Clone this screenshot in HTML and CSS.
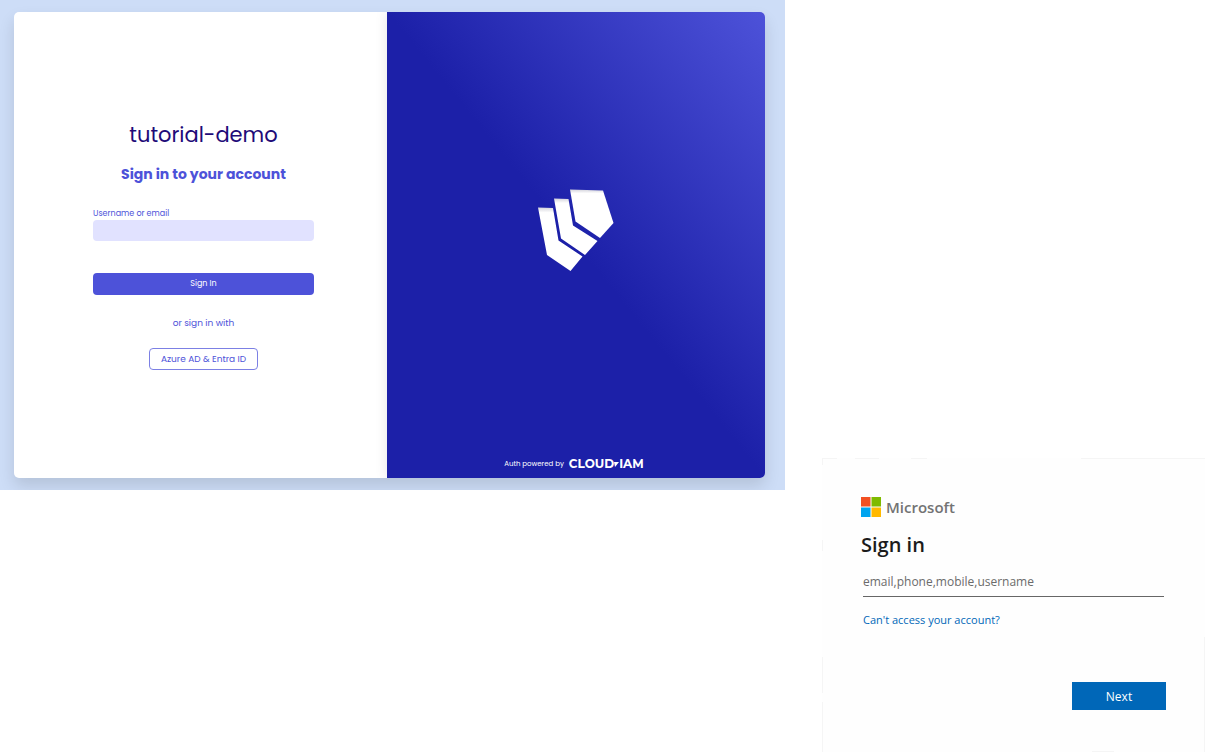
FILE: index.html
```html
<!DOCTYPE html>
<html lang="en">
<head>
    <meta charset="UTF-8">
    <meta name="viewport" content="width=device-width, initial-scale=1.0">
    <title>Sign in to your account</title>
    <link rel="stylesheet" href="styles.css">
</head>
<body>
    <main class="page">
        <section class="realm">
            <div class="realm-card">
                <form class="realm-form">
                    <h1>tutorial-demo</h1>
                    <h2>Sign in to your account</h2>
                    <label for="username">Username or email</label>
                    <input type="text" id="username" class="realm-input">
                    <button type="submit" class="btn-primary">Sign In</button>
                    <p class="or">or sign in with</p>
                    <button type="button" class="btn-outline">Azure AD &amp; Entra ID</button>
                </form>
                <div class="brand">
                    <svg class="brand-logo" viewBox="0 0 76 84" aria-hidden="true">
                        <defs>
                            <linearGradient id="shade" x1="0" y1="0" x2="0" y2="1">
                                <stop offset="0" stop-color="#d4d4dc"/>
                                <stop offset="0.08" stop-color="#fff"/>
                            </linearGradient>
                        </defs>
                        <g fill="url(#shade)">
                            <path d="M0 18.500L15 19L20.500 51.500L44.500 67.500L32.500 82L9 66Z"/>
                            <path d="M16 9.500L30.500 10L35 36.500L59.500 52L47 66L23 49.500Z"/>
                            <path d="M32 .5L65 1.500L75.500 34L62 49L37.500 32.500Z"/>
                        </g>
                    </svg>
                    <div class="powered">
                        <span>Auth powered by</span>
                        <a href="#" class="wordmark" aria-label="Cloud-IAM">CLOUD<svg viewBox="0 0 5 5" aria-hidden="true"><path d="M0 0H5L1 5Z" fill="#fff"/></svg>IAM</a>
                    </div>
                </div>
            </div>
        </section>

        <section class="microsoft">
            <form class="ms-card">
                <div class="ms-logo">
                    <svg viewBox="0 0 20 20" aria-hidden="true">
                        <path fill="#f25022" d="M0 0h9.500v9.500H0z"/>
                        <path fill="#7fba00" d="M10.500 0H20v9.500h-9.500z"/>
                        <path fill="#00a4ef" d="M0 10.500h9.500V20H0z"/>
                        <path fill="#ffb900" d="M10.500 10.500H20V20h-9.500z"/>
                    </svg>
                    <span>Microsoft</span>
                </div>
                <h2>Sign in</h2>
                <input type="text" class="ms-input" placeholder="email,phone,mobile,username" aria-label="email,phone,mobile,username">
                <a href="#" class="ms-help">Can't access your account?</a>
                <button type="submit" class="ms-next">Next</button>
            </form>
        </section>
    </main>
</body>
</html>
```
FILE: styles.css
```css
* {
    box-sizing: border-box;
}
body {
    margin: 0;
    background-color: #fff;
    font-family: Poppins, Inter, sans-serif;
}
h1, h2, p {
    margin: 0;
}
button, input {
    font-family: inherit;
}
button {
    cursor: pointer;
}
.page {
    display: grid;
    grid-template-columns: minmax(0, 1fr) 420px;
    min-height: 100vh;
}

/* Realm login */
.realm {
    align-self: start;
    padding: 12px 20px 12px 14px;
    background-color: #cdddf7;
    overflow: hidden;
}
.realm-card {
    display: grid;
    grid-template-columns: 373fr 378fr;
    background-color: #fff;
    border-radius: 5px;
    box-shadow: 0 8px 16px rgba(0, 0, 0, 0.12);
    overflow: hidden;
}
.realm-form {
    display: flex;
    flex-direction: column;
    padding: 106px 73px 108px 79px;
    color: #4d52d9;
}
.realm-form h1 {
    color: #210a78;
    font-size: 21px;
    font-weight: 400;
    line-height: 34px;
    text-align: center;
}
.realm-form h2 {
    margin-top: 12px;
    font-size: 14px;
    font-weight: 700;
    line-height: 20px;
    text-align: center;
}
.realm-form label {
    margin-top: 24px;
    font-size: 8px;
    line-height: 12px;
}
.realm-input {
    height: 21px;
    padding: 0 8px;
    border: none;
    border-radius: 4px;
    background-color: #e1e2ff;
    color: #4d52d9;
    font-size: 8px;
}
.btn-primary {
    height: 22px;
    margin-top: 32px;
    padding: 0;
    border: none;
    border-radius: 4px;
    background-color: #4d52d9;
    color: #fff;
    font-size: 8px;
}
.or {
    margin-top: 20px;
    font-size: 9px;
    line-height: 16px;
    text-align: center;
}
.btn-outline {
    align-self: center;
    height: 22px;
    margin-top: 17px;
    padding: 0 11px;
    border: 1px solid #7c80e4;
    border-radius: 4px;
    background-color: #fff;
    color: #4d52d9;
    font-size: 9px;
}
.brand {
    display: flex;
    flex-direction: column;
    align-items: center;
    padding: 177px 0 8px;
    background-image: linear-gradient(to top right, #1c20a8 50%, #4d52d9);
    box-shadow: 0 0 12px rgba(0, 0, 0, 0.1);
}
.brand-logo {
    width: 76px;
    height: 84px;
}
.powered {
    display: flex;
    align-items: center;
    gap: 5px;
    margin-top: auto;
    padding-right: 4px;
    color: #fff;
    font-size: 7px;
    line-height: 12px;
}
.wordmark {
    display: flex;
    align-items: center;
    color: #fff;
    font-family: Montserrat, Lato, sans-serif;
    font-size: 12px;
    font-weight: 700;
    text-decoration: none;
}
.wordmark svg {
    width: 5px;
    height: 5px;
}

/* Microsoft login */
.microsoft {
    display: flex;
    align-items: flex-end;
    padding-left: 37px;
    font-family: "Segoe UI", "Open Sans", sans-serif;
}
.ms-card {
    display: flex;
    flex: 1;
    flex-direction: column;
    padding: 38px 39px 42px 39px;
    background-color: #fefefe;
    /* broken hairline round the card */
    background-image:
        linear-gradient(#f5f5f5, #f5f5f5),
        linear-gradient(#f5f5f5, #f5f5f5),
        linear-gradient(#f5f5f5, #f5f5f5),
        linear-gradient(#f5f5f5, #f5f5f5),
        linear-gradient(#f5f5f5, #f5f5f5),
        linear-gradient(#f5f5f5, #f5f5f5),
        linear-gradient(#f5f5f5, #f5f5f5),
        linear-gradient(#f5f5f5, #f5f5f5),
        linear-gradient(#f5f5f5, #f5f5f5),
        linear-gradient(#f5f5f5, #f5f5f5);
    background-repeat: no-repeat;
    background-size: 15px 1px, 24px 1px, 16px 1px, 124px 1px, 1px 7px, 1px 11px, 1px 36px, 1px 50px, 1px 115px, 22px 1px;
    background-position: 0 0, 33px 0, 89px 0, right top, 0 0, 0 82px, 0 199px, left bottom, right bottom, 270px bottom;
}
.ms-logo {
    display: flex;
    align-items: center;
    gap: 5px;
    color: #737373;
    font-size: 15px;
    font-weight: 600;
    line-height: 22px;
}
.ms-logo svg {
    width: 20px;
    height: 20px;
}
.ms-card h2 {
    margin-top: 13px;
    color: #1b1b1b;
    font-size: 20px;
    font-weight: 600;
    line-height: 28px;
}
.ms-input {
    height: 28px;
    margin: 10px 2px 0;
    padding: 0 0 2px;
    border: none;
    border-bottom: 1px solid #666;
    background-color: transparent;
    color: #1b1b1b;
    font-size: 12px;
}
.ms-input::placeholder {
    color: #6b6b6b;
    opacity: 1;
}
.ms-help {
    align-self: flex-start;
    margin: 15px 2px 0;
    color: #0067b8;
    font-size: 11px;
    line-height: 16px;
    text-decoration: none;
}
.ms-next {
    align-self: flex-end;
    width: 94px;
    height: 28px;
    margin-top: 54px;
    border: none;
    background-color: #0067b8;
    color: #fff;
    font-size: 12px;
}
```
